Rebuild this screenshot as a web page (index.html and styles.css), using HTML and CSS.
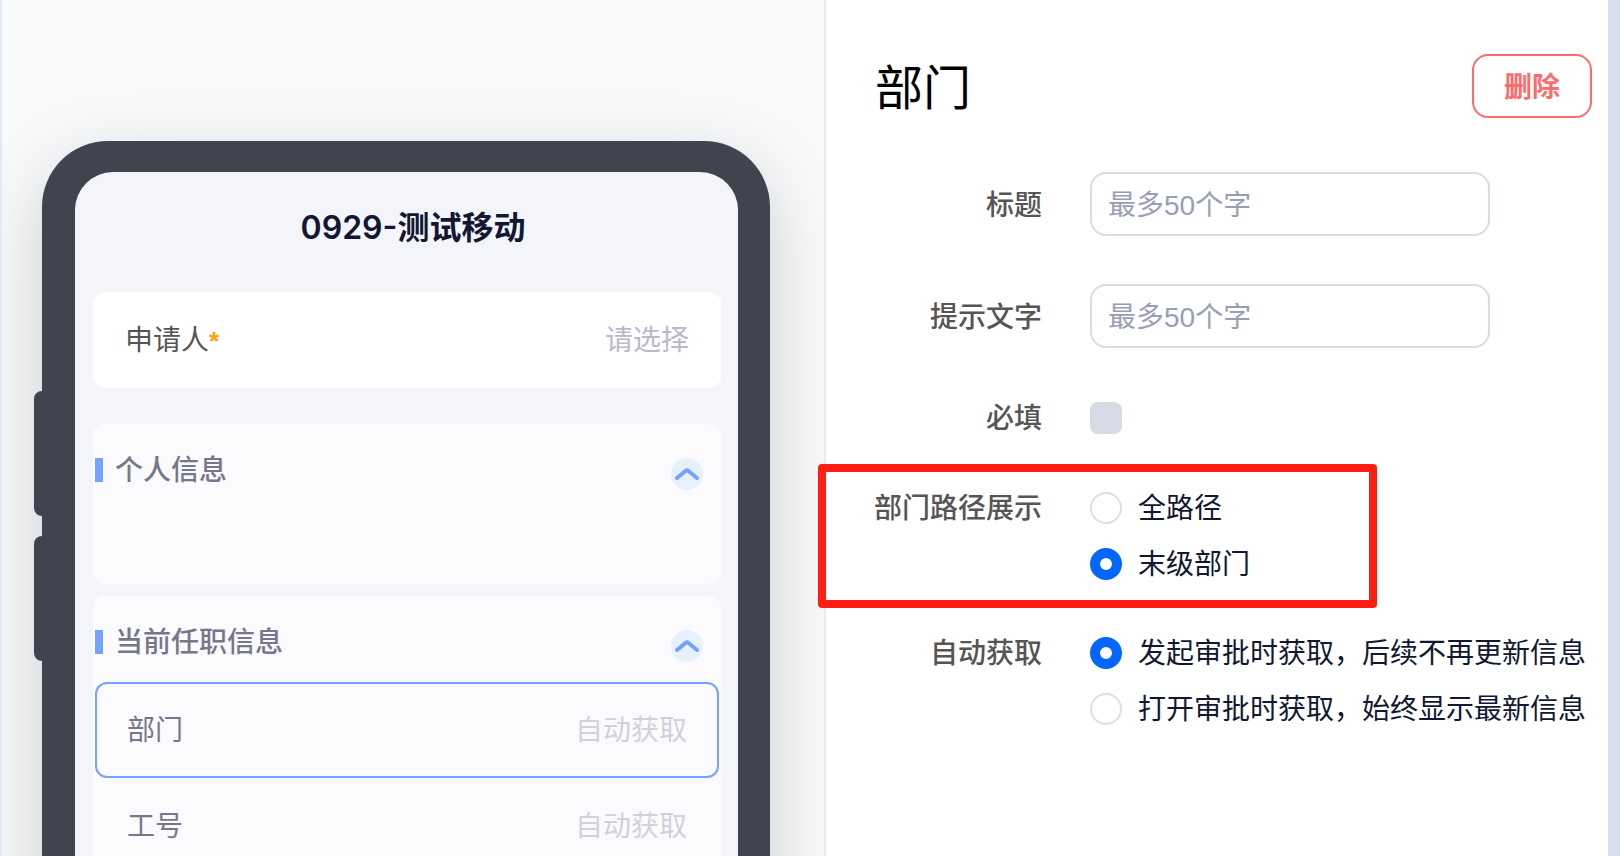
FILE: index.html
```html
<!DOCTYPE html>
<html lang="zh-CN">
<head>
<meta charset="utf-8">
<meta name="viewport" content="width=device-width, initial-scale=1">
<title>0929-测试移动</title>
<link rel="stylesheet" href="styles.css">
</head>
<body>
<div class="designer">
  <main class="canvas">
    <div class="phone">
      <div class="screen">
        <h2 class="form-title">0929-测试移动</h2>
        <section class="card card-solid">
          <div class="field">
            <span>申请人<span class="required">*</span></span>
            <span class="field-value">请选择</span>
          </div>
        </section>
        <section class="card card-group card-empty">
          <header class="group-head">
            <h3 class="group-title">个人信息</h3>
            <button class="collapse" type="button" aria-label="收起个人信息">
              <svg viewBox="0 0 32 32" width="32" height="32"><path d="M6 20 L14.500 13 Q16 11.800 17.500 13 L26 20"/></svg>
            </button>
          </header>
        </section>
        <section class="card card-group">
          <header class="group-head">
            <h3 class="group-title">当前任职信息</h3>
            <button class="collapse" type="button" aria-label="收起当前任职信息">
              <svg viewBox="0 0 32 32" width="32" height="32"><path d="M6 20 L14.500 13 Q16 11.800 17.500 13 L26 20"/></svg>
            </button>
          </header>
          <div class="field field-selected">
            <span>部门</span>
            <span class="field-value">自动获取</span>
          </div>
          <div class="field">
            <span>工号</span>
            <span class="field-value">自动获取</span>
          </div>
        </section>
      </div>
    </div>
  </main>

  <aside class="settings">
    <header class="settings-head">
      <h1 class="settings-title">部门</h1>
      <button class="delete" type="button">删除</button>
    </header>
    <form class="settings-form">
      <div class="row">
        <label class="row-label row-label-tall" for="title">标题</label>
        <input class="text-input" id="title" type="text" maxlength="50" placeholder="最多50个字">
      </div>
      <div class="row">
        <label class="row-label row-label-tall" for="hint">提示文字</label>
        <input class="text-input" id="hint" type="text" maxlength="50" placeholder="最多50个字">
      </div>
      <div class="row row-check">
        <label class="row-label" for="required">必填</label>
        <input class="checkbox" id="required" type="checkbox">
      </div>
      <div class="row row-highlight" role="radiogroup" aria-labelledby="path-label">
        <span class="row-label" id="path-label">部门路径展示</span>
        <div class="options">
          <label class="option"><input class="radio" type="radio" name="path">全路径</label>
          <label class="option"><input class="radio" type="radio" name="path" checked>末级部门</label>
        </div>
      </div>
      <div class="row row-fetch" role="radiogroup" aria-labelledby="fetch-label">
        <span class="row-label" id="fetch-label">自动获取</span>
        <div class="options">
          <label class="option"><input class="radio" type="radio" name="fetch" checked>发起审批时获取，后续不再更新信息</label>
          <label class="option"><input class="radio" type="radio" name="fetch">打开审批时获取，始终显示最新信息</label>
        </div>
      </div>
    </form>
  </aside>
  <div class="edge"></div>
</div>
</body>
</html>
```
FILE: styles.css
```css
*,
*::before,
*::after {
  box-sizing: border-box;
}

body {
  margin: 0;
  font-family: Inter, "Noto Sans CJK SC", sans-serif;
  font-size: 28px;
  line-height: 32px;
  color: #121733;
}

h1, h2, h3 {
  margin: 0;
}

button, input {
  font: inherit;
}

.designer {
  display: grid;
  grid-template-columns: minmax(0, 826fr) minmax(0, 782fr) 12px;
  height: 100vh;
}

/* Phone preview */
.canvas {
  display: flex;
  padding: 141px 54px 0 40px;
  border: solid #e6e8f4;
  border-width: 0 2px;
  background: #f7f9fb;
  overflow: hidden;
}

.phone {
  position: relative;
  flex: 1;
  height: 1400px;
  padding: 31px 32px 0 33px;
  border-radius: 66px;
  background: #40444f;
  box-shadow: 0 24px 72px rgba(0, 0, 0, 0.18);
}

/* Side keys */
.phone::before,
.phone::after {
  content: "";
  position: absolute;
  left: -8px;
  top: 250px;
  width: 16px;
  height: 125px;
  border-radius: 8px;
  background: #40444f;
}

.phone::after {
  top: 395px;
}

.screen {
  height: 100%;
  padding: 36px 17px 0 18px;
  border-radius: 38px 38px 0 0;
  background: #f4f5fb;
}

.form-title {
  margin-bottom: 44px;
  padding-left: 12px;
  font-size: 32px;
  font-weight: 600;
  line-height: 40px;
  text-align: center;
}

.card {
  border-radius: 12px;
  background: #fbfbfe;
}

.card-solid {
  margin-bottom: 36px;
  background: #fff;
  color: #555;
}

.card-group {
  padding: 0 2px;
  color: #77778c;
}

.card-empty {
  min-height: 160px;
  margin-bottom: 12px;
}

.group-head {
  display: flex;
  align-items: flex-end;
  justify-content: space-between;
  padding: 30px 16px 20px 0;
}

.group-title {
  display: flex;
  align-items: center;
  gap: 12px;
  padding-bottom: 4px;
  font-size: 28px;
  font-weight: 500;
}

.group-title::before {
  content: "";
  width: 8px;
  height: 24px;
  background: #74a3ff;
}

.collapse {
  display: flex;
  padding: 0;
  border: 0;
  border-radius: 50%;
  background: #e7f0ff;
}

.collapse path {
  fill: none;
  stroke: #74a3ff;
  stroke-width: 4;
  stroke-linecap: round;
}

.field {
  display: flex;
  align-items: center;
  justify-content: space-between;
  height: 96px;
  padding: 0 32px;
}

.field-selected {
  padding: 0 30px;
  border: 2px solid #74a3ff;
  border-radius: 12px;
}

.field-value {
  color: #d1d1de;
}

.card-solid .field-value {
  color: #b9b9cb;
}

.required {
  font-family: "Liberation Sans", sans-serif;
  font-weight: 700;
  font-size: 26px;
  color: #ff9f00;
}

/* Settings panel */
.settings {
  padding: 54px 16px 0 49px;
  background: #fff;
}

.settings-head {
  display: flex;
  align-items: center;
  justify-content: space-between;
  margin-bottom: 54px;
}

.settings-title {
  padding-top: 4px;
  font-size: 48px;
  font-weight: 400;
  line-height: 60px;
  color: #000;
}

.delete {
  width: 120px;
  height: 64px;
  padding: 2px 0 0;
  border: 2px solid #ff6b6b;
  border-radius: 16px;
  background: #fff;
  font-weight: 600;
  color: #ff6b6b;
}

.settings-form {
  display: grid;
  gap: 48px;
}

.row {
  display: grid;
  grid-template-columns: 167px minmax(0, 1fr);
  column-gap: 48px;
}

.row-check {
  padding: 6px 0 10px;
}

.row-fetch {
  padding-top: 9px;
}

.row-label {
  display: flex;
  justify-content: flex-end;
  font-weight: 500;
  white-space: nowrap;
  color: #555;
}

.row-label-tall {
  align-items: center;
  padding-top: 2px;
}

.text-input {
  width: 100%;
  max-width: 400px;
  height: 64px;
  padding: 4px 16px 0;
  border: 2px solid #d9dbe6;
  border-radius: 16px;
  background: #fff;
  font-family: "Liberation Sans", "Noto Sans CJK SC", sans-serif;
  color: #121733;
}

.text-input::placeholder {
  color: #999eb7;
  opacity: 1;
}

.checkbox,
.radio {
  appearance: none;
  flex: none;
  width: 32px;
  height: 32px;
  margin: 0;
}

.checkbox {
  border-radius: 8px;
  background: #d8dbe5;
}

.radio {
  border: 2px solid #dcdee8;
  border-radius: 50%;
  background: #fff;
}

.radio:checked {
  border: 10px solid #0466ff;
}

.options {
  display: grid;
  gap: 24px;
}

.option {
  display: flex;
  align-items: center;
  gap: 16px;
  white-space: nowrap;
}

/* Callout frame drawn over the row */
.row-highlight {
  position: relative;
}

.row-highlight::after {
  content: "";
  position: absolute;
  top: -28px;
  bottom: -28px;
  left: -57px;
  width: 559px;
  border: 8px solid #ff1f12;
  border-radius: 4px;
  pointer-events: none;
}

.edge {
  background: #d8deed;
}
```
